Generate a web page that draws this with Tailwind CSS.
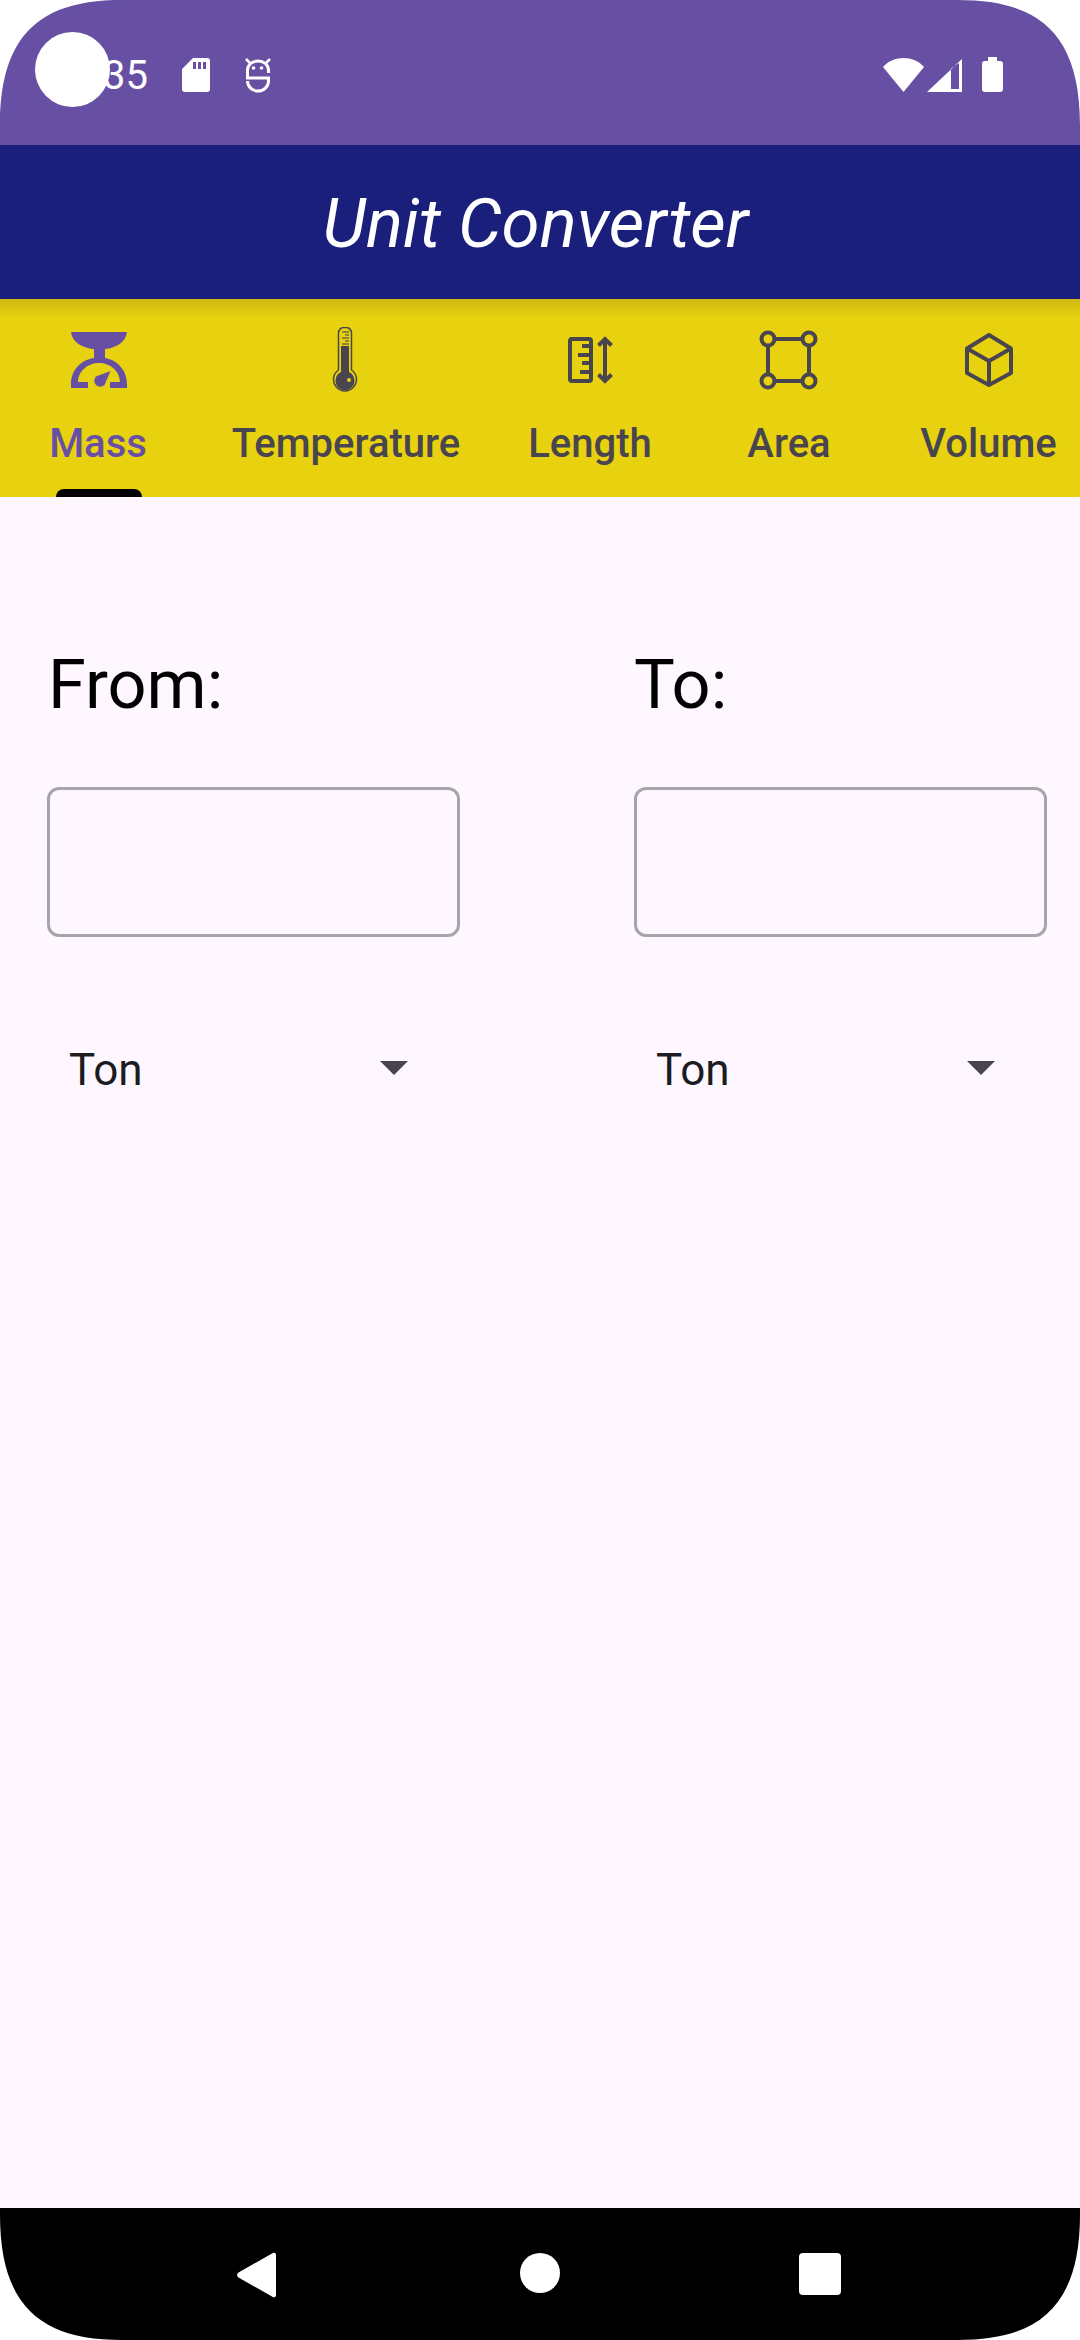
<!DOCTYPE html>
<html>
<head>
<meta charset="utf-8">
<script src="https://cdn.jsdelivr.net/npm/@tailwindcss/browser@4"></script>
</head>
<body class="m-0 bg-white">
<div class="relative w-[1080px] h-[2340px] overflow-hidden flex flex-col bg-[#fef7ff] font-['Roboto',sans-serif]">
  <!-- status bar -->
  <div class="h-[145px] shrink-0 bg-[#6750a4] flex items-start text-white">
    <div class="ml-[103px] mt-[52px] text-[40px] leading-[47px] w-[66px]">35</div>
    <svg class="ml-[13px] mt-[58px]" width="28" height="34" viewBox="182 58 28 34"><path fill="#fff" fill-rule="evenodd" d="M193 58H207a3 3 0 0 1 3 3V89a3 3 0 0 1-3 3H185a3 3 0 0 1-3-3V69ZM193 62v7h3v-7ZM198 62v7h3v-7ZM203 62v7h3v-7Z"/></svg>
    <svg class="ml-[35px] mt-[58px]" width="26" height="35" viewBox="245 58 26 35"><path fill="none" stroke="#fff" stroke-width="3" d="M268.500 73V70a10.500 9 0 0 0-21 0V78H268.500V81a10.500 10 0 0 1-21 0V81"/><path stroke="#fff" stroke-width="2.500" d="M246 59l4 4M270 59l-4 4"/><circle cx="253.500" cy="68" r="1.800" fill="#fff"/><circle cx="261.500" cy="68" r="1.800" fill="#fff"/></svg>
    <svg class="ml-[612px] mt-[57px]" width="121" height="36" viewBox="883 57 121 36"><path fill="#fff" d="M883 67C888 61 896 58 903.500 58C911 58 919 61 924 67L903.500 92Z"/><path fill="#fff" fill-rule="evenodd" d="M962 59V92H927ZM951 68.500V89H959V63Z"/><path fill="#fff" d="M988 57H997V61H1000a3 3 0 0 1 3 3V89a3 3 0 0 1-3 3H985a3 3 0 0 1-3-3V64a3 3 0 0 1 3-3H988Z"/></svg>
  </div>
  <!-- app bar -->
  <div class="h-[154px] shrink-0 bg-[#1a1f7b] flex items-center justify-center pr-[9px] pt-[3px] text-white italic text-[69px] leading-[81px]">Unit Converter</div>
  <!-- tabs -->
  <div class="relative h-[198px] shrink-0 bg-[#e8d20f] grid grid-cols-[196px_300px_188px_210px_189px]">
    <div class="absolute top-0 left-0 right-0 h-[20px] bg-gradient-to-b from-[#cdb910] to-[#e8d20f]"></div>
    <div class="relative flex flex-col items-center pt-[28px] text-[#6750a4]">
      <svg width="66" height="66" viewBox="65 327 66 66" fill="#6750a4"><path d="M71 332H127C126 342 116 348 105 349V358C118 360 127 371 127 384V388H110V382H120C120 371 110 363 99 363C88 363 78 371 78 382H88V388H71V384C71 371 80 360 94 358V349C82 348 72 342 71 332Z"/><path d="M110.500 371L104.500 385A6 6 0 1 1 96 376.500Z"/></svg>
      <span class="mt-[27px] text-[40px] leading-[47px] font-medium">Mass</span>
      <div class="absolute left-[56px] bottom-0 w-[86px] h-[8px] bg-black rounded-t-[8px]"></div>
    </div>
    <div class="flex flex-col items-center pt-[28px] text-[#49454f]">
      <svg width="66" height="66" viewBox="313 327 66 66"><path fill="none" stroke="#49454f" stroke-width="1.500" d="M338.500 370V333a5.500 5.500 0 0 1 5.500-5.500H346a5.500 5.500 0 0 1 5.500 5.500V370a11.500 11.500 0 1 1-13 0Z"/><path fill="#49454f" d="M341 346H349V372a9.500 9.500 0 1 1-8 0Z"/><circle cx="349" cy="380" r="2" fill="#e8d20f"/><path stroke="#49454f" stroke-opacity=".75" stroke-width="1.500" d="M342 332H349M345 335H349M342 338H349M345 341H349M342 344H349"/></svg>
      <span class="mt-[27px] text-[40px] leading-[47px] font-medium">Temperature</span>
    </div>
    <div class="flex flex-col items-center pt-[28px] text-[#49454f]">
      <svg width="66" height="66" viewBox="557 327 66 66"><path fill="none" stroke="#49454f" stroke-width="4" d="M571 339H589a2 2 0 0 1 2 2V379a2 2 0 0 1-2 2H572a2 2 0 0 1-2-2V341a2 2 0 0 1 1-2Z"/><path fill="none" stroke="#49454f" stroke-width="4" d="M582 346H591M578 355H591M582 363H591M580 372H591M605 339V381M598.500 345.500L605 339L611.500 345.500M598.500 374.500L605 381L611.500 374.500"/></svg>
      <span class="mt-[27px] text-[40px] leading-[47px] font-medium">Length</span>
    </div>
    <div class="flex flex-col items-center pt-[28px] text-[#49454f]">
      <svg width="66" height="66" viewBox="756 327 66 66" fill="none" stroke="#49454f" stroke-width="4"><circle cx="768" cy="339" r="6.500"/><circle cx="809" cy="339" r="6.500"/><circle cx="768" cy="381" r="6.500"/><circle cx="809" cy="381" r="6.500"/><path d="M774 339H803M774 381H803M768 345V375M809 345V375"/></svg>
      <span class="mt-[27px] text-[40px] leading-[47px] font-medium">Area</span>
    </div>
    <div class="flex flex-col items-center pt-[28px] text-[#49454f]">
      <svg width="66" height="66" viewBox="955 327 66 66" fill="none" stroke="#49454f" stroke-width="4" stroke-linejoin="round"><path d="M988 335L1010 348.500V373L988 385L966 373V348.500ZM966 348.500L988 361L1010 348.500M988 361V385"/></svg>
      <span class="mt-[27px] text-[40px] leading-[47px] font-medium">Volume</span>
    </div>
  </div>
  <!-- content -->
  <div class="flex-1 grid grid-cols-[413px_413px] gap-x-[174px] pl-[47px] content-start pt-[149px]">
    <div class="flex flex-col">
      <div class="text-[68.500px] leading-[77px] text-black pl-[1px]">From:</div>
      <div class="mt-[64px] h-[150px] border-[3px] border-[#a8a4ab] rounded-[12px]"></div>
      <div class="mt-[107px] relative flex items-center h-[52px] pl-[22px] pr-[52px] justify-between">
        <span class="text-[44px] leading-[52px] text-[#1c1b1f]">Ton</span>
        <svg width="28" height="14" viewBox="0 0 28 14" class="mb-[4px]"><path fill="#49454f" d="M0 0H28L14 14Z"/></svg>
      </div>
    </div>
    <div class="flex flex-col">
      <div class="text-[68.500px] leading-[77px] text-black">To:</div>
      <div class="mt-[64px] h-[150px] border-[3px] border-[#a8a4ab] rounded-[12px]"></div>
      <div class="mt-[107px] relative flex items-center h-[52px] pl-[22px] pr-[52px] justify-between">
        <span class="text-[44px] leading-[52px] text-[#1c1b1f]">Ton</span>
        <svg width="28" height="14" viewBox="0 0 28 14" class="mb-[4px]"><path fill="#49454f" d="M0 0H28L14 14Z"/></svg>
      </div>
    </div>
  </div>
  <!-- nav bar -->
  <div class="h-[132px] shrink-0 bg-black flex items-start pt-[44px]">
    <svg class="ml-[236px]" width="41" height="46" viewBox="0 0 41 46"><path fill="#fff" d="M36 1.500C37.500 0 40 0.500 40 3V43C40 45.500 37.500 46 36 44.500L2.500 25.500C0.500 24 0.500 22 2.500 20.500Z"/></svg>
    <div class="ml-[243px] mt-[1px] w-[40px] h-[40px] rounded-full bg-white"></div>
    <div class="ml-[239px] mt-[1px] w-[42px] h-[42px] rounded-[4px] bg-white"></div>
  </div>
  <!-- screen-corner masks and the recording dot lie over the page -->
  <svg class="absolute left-0 top-0" width="125" height="125" viewBox="0 0 125 125"><path fill="#fff" d="M0 0H122C45 0 0 30 0 125Z"/></svg>
  <svg class="absolute right-0 top-0 -scale-x-100" width="125" height="125" viewBox="0 0 125 125"><path fill="#fff" d="M0 0H122C45 0 0 30 0 125Z"/></svg>
  <svg class="absolute left-0 bottom-0 -scale-y-100" width="125" height="125" viewBox="0 0 125 125"><path fill="#fff" d="M0 0H122C45 0 0 30 0 125Z"/></svg>
  <svg class="absolute right-0 bottom-0 -scale-100" width="125" height="125" viewBox="0 0 125 125"><path fill="#fff" d="M0 0H122C45 0 0 30 0 125Z"/></svg>
  <div class="absolute left-[35px] top-[32px] w-[75px] h-[75px] rounded-full bg-white"></div>
</div>
</body>
</html>
